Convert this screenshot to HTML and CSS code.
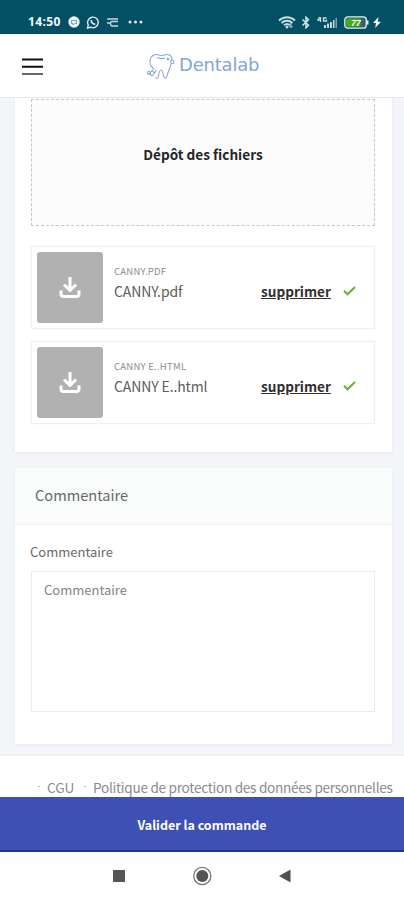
FILE: index.html
```html
<!DOCTYPE html>
<html lang="fr">
<head>
<meta charset="utf-8">
<title>Dentalab</title>
<link rel="stylesheet" href="styles.css">
</head>
<body>
<div class="status">
  <div class="status-left">
    <span class="clock">14:50</span>
    <svg class="i-chat" width="12" height="12" viewBox="0 0 12 12"><circle cx="6" cy="6" r="5.700" fill="#eef4f6"/><path d="M3.500 4.500h5v3h-2l-1.500 1.500v-1.500h-1.500z" fill="none" stroke="#5d8b99" stroke-width=".8"/></svg>
    <svg class="i-wa" width="14" height="13" viewBox="0 0 14 13"><path d="M1.500 12l.8-3A5.300 5.300 0 1 1 4.600 11.200z" fill="none" stroke="#dfeaed" stroke-width="1.400"/><path d="M5.200 4c0 2.500 1.500 4 4 4.300" fill="none" stroke="#dfeaed" stroke-width="1.700"/></svg>
    <svg class="i-net" width="13" height="11" viewBox="0 0 13 11"><path d="M1 2h11M12 4.500H6c-2 0-2 4 0 4.500h6M1 6h3" fill="none" stroke="#c3d6dc" stroke-width="1.400"/></svg>
    <svg class="i-dots" width="15" height="4" viewBox="0 0 15 4" fill="#dfeaed"><circle cx="2" cy="2" r="1.500"/><circle cx="7.500" cy="2" r="1.500"/><circle cx="13" cy="2" r="1.500"/></svg>
  </div>
  <div class="status-right">
    <svg width="18" height="13" viewBox="0 0 18 13"><path d="M1 4.500a11.500 11.500 0 0 1 16 0M3.500 7a8 8 0 0 1 11 0M6 9.300a4.500 4.500 0 0 1 6 0" fill="none" stroke="#c9dadf" stroke-width="1.900"/><circle cx="9" cy="11" r="1.500" fill="#c9dadf"/><path d="M13 6.500v5M11.500 10l1.500 1.500 1.500-1.500" fill="none" stroke="#c9dadf"/></svg>
    <svg class="i-bt" width="10" height="13" viewBox="0 0 10 13"><path d="M1.500 3.500l6 5.700L5 11.800V1.200l2.500 2.600-6 5.700" fill="none" stroke="#d5e2e6" stroke-width="1.500"/></svg>
    <svg class="i-sig" width="21" height="13" viewBox="0 0 21 13"><path d="M2.500 1L1 4h3M3.500 1v5M9.500 2H6.500v3h3V3.500" fill="none" stroke="#c9dadf" stroke-width="1.300"/><path d="M7 9h2v3H7zM10 7.500h2V12h-2zM13 6h2v6h-2zM16 4h1.500v8H16z" fill="#c9dadf"/><path d="M18.500 2h1.500v10h-1.500z" fill="#7fa3ad"/></svg>
    <svg class="i-bat" width="25" height="13" viewBox="0 0 25 13"><rect x=".8" y=".8" width="21.500" height="11.400" rx="3" fill="#35606b" stroke="#e4edef" stroke-width="1.300"/><path d="M3.500 2.500h13v8h-13a1.300 1.300 0 0 1-1.300-1.300V3.800a1.300 1.300 0 0 1 1.300-1.300z" fill="#3fae1c"/><path d="M23.700 4.500v4" stroke="#e4edef" stroke-width="1.500"/><text class="bat-text" x="12" y="9.700" text-anchor="middle">77</text></svg>
    <svg class="i-bolt" width="8" height="11" viewBox="0 0 8 11"><path d="M5.500 0L0 6h3L2.200 11 8 4.800H4.800z" fill="#f2f7f8"/></svg>
  </div>
</div>
<header class="nav">
  <svg class="burger" width="21" height="18" viewBox="0 0 21 18"><path d="M0 1.500h21M0 8.800h21" stroke="#111" stroke-width="2"/><path d="M0 16h21" stroke="#666" stroke-width="2"/></svg>
  <div class="brand">
    <svg width="28" height="27" viewBox="0 0 28 27" fill="none" stroke="#8aa9d8" stroke-width="1.100"><path d="M4 13C1 6 5 1 10 1.500c4 1.500 6 1.500 9 0 4-.5 6 2 6 5.500M24 11c-1 5-3 7-4 12-.5 3-3 3-3.500 0-.5-4-1-6-2.500-6s-2 3-2.500 6c-.5 2.500-2 3-3 1.500M4 13c1.500 1.500 2.500 2.500 3 4M10 4.500c3 1.500 5 1.500 8 .5"/><circle cx="25.300" cy="9" r="1.700"/><circle cx="21" cy="6" r=".8"/><circle cx="2" cy="20" r="1.500"/><path d="M5 17.500l2.500 2.500L5 23l-2.500-2.500zM7.500 20l2-3"/></svg>
    <span class="brand-name">Dentalab</span>
  </div>
</header>
<main class="page">
  <section class="card files">
    <div class="drop">Dépôt des fichiers</div>
    <div class="file">
      <div class="thumb"><svg width="22" height="23" viewBox="0 0 22 23"><path d="M11 1v12.500M5 8.500l6 6 6-6M2 14.500v3.500q0 2.500 2.500 2.500h13q2.500 0 2.500-2.500v-3.500" fill="none" stroke="#fff" stroke-width="3" stroke-linejoin="round"/></svg></div>
      <div class="names"><div class="ext">CANNY.PDF</div><div class="name">CANNY.pdf</div></div>
      <a class="del">supprimer</a>
      <svg class="check" width="13" height="10" viewBox="0 0 13 10"><path d="M1 4.800l3.500 3.500L12 1" fill="none" stroke="#5db82c" stroke-width="2"/></svg>
    </div>
    <div class="file">
      <div class="thumb"><svg width="22" height="23" viewBox="0 0 22 23"><path d="M11 1v12.500M5 8.500l6 6 6-6M2 14.500v3.500q0 2.500 2.500 2.500h13q2.500 0 2.500-2.500v-3.500" fill="none" stroke="#fff" stroke-width="3" stroke-linejoin="round"/></svg></div>
      <div class="names"><div class="ext">CANNY E..HTML</div><div class="name">CANNY E..html</div></div>
      <a class="del">supprimer</a>
      <svg class="check" width="13" height="10" viewBox="0 0 13 10"><path d="M1 4.800l3.500 3.500L12 1" fill="none" stroke="#5db82c" stroke-width="2"/></svg>
    </div>
  </section>
  <section class="card comment">
    <h2 class="card-head">Commentaire</h2>
    <div class="card-body">
      <label class="label" for="c">Commentaire</label>
      <textarea class="area" id="c" placeholder="Commentaire"></textarea>
    </div>
  </section>
</main>
<footer class="foot"><span class="dot"></span><span class="cgu">CGU</span><span class="dot"></span><span class="policy">Politique de protection des données personnelles</span></footer>
<button class="submit">Valider la commande</button>
<div class="sysnav">
  <svg width="180" height="20" viewBox="0 0 180 20"><rect x="1" y="4" width="12" height="12" fill="#555"/><circle cx="90.300" cy="10" r="8.600" fill="none" stroke="#777" stroke-width="1.300"/><circle cx="90.300" cy="10" r="6" fill="#555"/><path d="M167 10l11.500-6.500v13z" fill="#505050"/></svg>
</div>
</body>
</html>
```
FILE: styles.css
```css
* { box-sizing: border-box; }
body {
  margin: 0;
  width: 404px;
  height: 900px;
  overflow: hidden;
  display: flex;
  flex-direction: column;
  background: #f3f5f9;
  color: #66696c;
  font-family: "Noto Sans CJK SC", "Noto Sans", sans-serif;
}
svg { display: block; flex: none; }
.status {
  height: 34px;
  flex: none;
  background: #035065;
  display: flex;
  justify-content: space-between;
  padding: 10px 23px 0 28px;
}
.status-left, .status-right { display: flex; align-items: center; height: 24px; }
.clock { font: bold 12px/26px "Open Sans", sans-serif; color: #f4f8f9; width: 40px; letter-spacing: .4px; }
.i-wa { margin-left: 6px; }
.i-net { margin-left: 6px; }
.i-dots { margin-left: 9px; }
.i-bt { margin-left: 5px; }
.i-sig { margin-left: 6px; }
.i-bat { margin-left: 6px; }
.i-bolt { margin-left: 4px; }
.bat-text { font: italic bold 8.500px "Liberation Sans", sans-serif; fill: #fff; }
.nav {
  height: 64px;
  flex: none;
  background: #fff;
  border-bottom: 1px solid #e6e7ea;
  display: flex;
  padding: 19px 0 0 22px;
}
.burger { margin-top: 5px; }
.brand { display: flex; margin-left: 104px; }
.brand-name {
  font: 18px/24px "DejaVu Sans", sans-serif;
  color: #83a5d8;
  margin-left: 4px;
  letter-spacing: -.2px;
}
.page { flex: none; height: 657px; padding: 0 12px 0 15px; }
.card { background: #fff; box-shadow: 0 1px 3px #e4e7ec; }
.files { height: 354px; padding: 1px 17px 0 16px; }
.drop {
  height: 127px;
  border: 1px dashed #c5c7c8;
  background: #fcfcfc;
  text-align: center;
  font-weight: bold;
  font-size: 13.6px;
  line-height: 108px;
  color: #22262a;
  margin-bottom: 20px;
}
.file {
  height: 83px;
  border: 1px solid #eeefef;
  box-shadow: 0 0 2px #f3f3f3;
  margin-bottom: 12px;
  padding: 5px;
  display: flex;
}
.thumb {
  width: 66px;
  height: 71px;
  background: #b1b1b1;
  border-radius: 3px;
  display: flex;
  align-items: center;
  justify-content: center;
}
.names { margin-left: 11px; width: 147px; }
.ext { font-size: 9.5px; line-height: 14px; margin-top: 12px; color: #8c8c8c; letter-spacing: .25px; white-space: nowrap; }
.name { font-size: 14px; line-height: 20px; margin-top: 3px; color: #5c5c5c; letter-spacing: -.12px; white-space: nowrap; }
.del { font-weight: bold; font-size: 13.6px; line-height: 20px; margin-top: 29px; color: #303030; text-decoration: underline; width: 70px; }
.check { margin: 34px 0 0 12px; }
.comment { margin-top: 16px; height: 276px; }
.card-head {
  margin: 0;
  height: 57px;
  background: #fafcfb;
  border-bottom: 1px solid #f0f2f2;
  font-size: 14.6px;
  font-weight: 400;
  line-height: 54px;
  padding-left: 20px;
}
.card-body { padding: 17px 17px 0 15px; }
.label { display: block; font-size: 13px; line-height: 20px; }
.area {
  display: block;
  margin: 9px 0 0 1px;
  width: calc(100% - 1px);
  height: 141px;
  border: 1px solid #ebecee;
  background: #fff;
  padding: 8px 12px;
  resize: none;
  font: 13px/20px "Noto Sans CJK SC", sans-serif;
  color: #777;
}
.area::placeholder { color: #808386; opacity: 1; }
.foot {
  flex: none;
  height: 42px;
  background: #fff;
  border-top: 1px solid #eceef1;
  padding: 21px 0 0 38px;
  display: flex;
  font-size: 13.6px;
  line-height: 20px;
  color: #878b8f;
  white-space: nowrap;
  overflow: hidden;
}
.dot { width: 2px; height: 1px; background: #b5b8bb; margin: 9px 7px 0 0; }
.cgu { width: 37px; }
.policy { letter-spacing: -.28px; }
.submit {
  flex: none;
  width: 404px;
  height: 55px;
  border: 0;
  border-bottom: 2px solid #17369a;
  background: #3f50b5;
  color: #fff;
  font: bold 12.5px/20px "Noto Sans CJK SC", sans-serif;
  padding: 2px 0 0;
}
.sysnav { flex: 1; background: #fff; padding: 14px 0 0 112px; }
```
